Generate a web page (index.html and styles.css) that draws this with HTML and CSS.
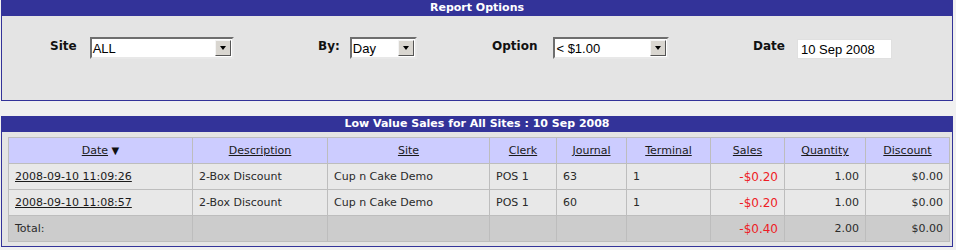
FILE: index.html
```html
<!DOCTYPE html>
<html>
<head>
  <title>Low Value Sales</title>
  <link rel="stylesheet" href="styles.css">
</head>
<body>
  <div class="panel">
    <div class="panel-title">Report Options</div>
    <div class="panel-body options">
      <div class="field field-site">
        <span class="label">Site</span>
        <div class="select w-site"><span class="select-text">ALL</span><span class="select-btn"></span></div>
      </div>
      <div class="field field-by">
        <span class="label">By:</span>
        <div class="select w-by"><span class="select-text">Day</span><span class="select-btn"></span></div>
      </div>
      <div class="field field-option">
        <span class="label">Option</span>
        <div class="select w-option"><span class="select-text">&lt; $1.00</span><span class="select-btn"></span></div>
      </div>
      <div class="field field-date">
        <span class="label">Date</span>
        <input type="text" class="date-input" value="10 Sep 2008">
      </div>
    </div>
  </div>

  <div class="panel report">
    <div class="panel-title">Low Value Sales for All Sites : 10 Sep 2008</div>
    <div class="panel-body">
      <table class="grid">
        <thead>
          <tr>
            <th class="c-date"><a href="#">Date</a> <span class="sort">&#9660;</span></th>
            <th class="c-desc"><a href="#">Description</a></th>
            <th class="c-site"><a href="#">Site</a></th>
            <th class="c-clerk"><a href="#">Clerk</a></th>
            <th class="c-journal"><a href="#">Journal</a></th>
            <th class="c-term"><a href="#">Terminal</a></th>
            <th class="c-sales"><a href="#">Sales</a></th>
            <th class="c-qty"><a href="#">Quantity</a></th>
            <th class="c-disc"><a href="#">Discount</a></th>
          </tr>
        </thead>
        <tbody>
          <tr>
            <td><a href="#">2008-09-10 11:09:26</a></td>
            <td>2-Box Discount</td>
            <td>Cup n Cake Demo</td>
            <td>POS 1</td>
            <td>63</td>
            <td>1</td>
            <td class="num neg">-$0.20</td>
            <td class="num">1.00</td>
            <td class="num">$0.00</td>
          </tr>
          <tr>
            <td><a href="#">2008-09-10 11:08:57</a></td>
            <td>2-Box Discount</td>
            <td>Cup n Cake Demo</td>
            <td>POS 1</td>
            <td>60</td>
            <td>1</td>
            <td class="num neg">-$0.20</td>
            <td class="num">1.00</td>
            <td class="num">$0.00</td>
          </tr>
          <tr class="total">
            <td>Total:</td>
            <td></td>
            <td></td>
            <td></td>
            <td></td>
            <td></td>
            <td class="num neg">-$0.40</td>
            <td class="num">2.00</td>
            <td class="num">$0.00</td>
          </tr>
        </tbody>
      </table>
    </div>
  </div>
</body>
</html>
```

FILE: styles.css
```css
body {
  margin: 0;
  padding: 0 0 0 1px;
  background-color: #f0f0f0;
  font-family: "DejaVu Sans", Verdana, sans-serif;
  font-size: 11px;
  color: #222;
}

.panel {
  width: 950px;
  border: 1px solid #333399;
  background-color: #e4e4e4;
}

.panel-title {
  height: 15px;
  line-height: 14px;
  background-color: #333399;
  color: #ffffff;
  font-weight: bold;
  font-size: 11px;
  text-align: center;
}

/* report options */
.options {
  display: flex;
  align-items: center;
  height: 84px;
  padding-left: 48px;
  box-sizing: border-box;
  padding-bottom: 20px;
}

.field {
  display: flex;
  align-items: center;
}

.field-site { width: 268px; }
.field-by { width: 174px; }
.field-option { width: 261px; }

.label {
  font-weight: bold;
  font-size: 12px;
  color: #111;
  margin-right: 13px;
  margin-top: -4px;
}

.field-by .label { margin-right: 10px; }
.field-option .label { margin-right: 16px; }
.field-date .label { margin-right: 12px; }

.select {
  display: flex;
  align-items: center;
  height: 22px;
  box-sizing: border-box;
  border-style: solid;
  border-width: 2px;
  border-color: #6e6e6e #e8e8e8 #e8e8e8 #6e6e6e;
  background-color: #ffffff;
  font-family: "Liberation Sans", Arial, sans-serif;
  font-size: 13px;
  color: #000;
}

.w-site { width: 144px; }
.w-by { width: 67px; }
.w-option { width: 116px; }

.select-text {
  flex: 1;
  padding-left: 1px;
}

.select-btn {
  position: relative;
  width: 16px;
  height: 16px;
  margin-right: 1px;
  box-sizing: border-box;
  background-color: #d9d6d0;
  border-style: solid;
  border-width: 1px;
  border-color: #f4f4f4 #555 #555 #f4f4f4;
}

.select-btn::after {
  content: "";
  position: absolute;
  left: 4px;
  top: 5px;
  border-left: 3px solid transparent;
  border-right: 3px solid transparent;
  border-top: 4px solid #000;
}

.date-input {
  width: 95px;
  height: 20px;
  box-sizing: border-box;
  margin: 2px 0 0 0;
  padding: 0 3px;
  border: 1px solid #e0e0e0;
  background-color: #ffffff;
  font-family: "Liberation Sans", Arial, sans-serif;
  font-size: 13px;
  color: #000;
}

/* report table */
.report {
  margin-top: 15px;
}

.report .panel-body {
  padding: 5px 3px 4px 6px;
}

.grid {
  border-collapse: collapse;
  table-layout: fixed;
  width: 941px;
}

.grid th,
.grid td {
  border: 1px solid #bdbdbd;
  padding: 0 6px;
  height: 25px;
  box-sizing: border-box;
  white-space: nowrap;
  text-align: left;
  color: #2a2a2a;
}

.grid th {
  background-color: #ccccff;
  font-weight: normal;
  text-align: center;
  height: 26px;
}

.grid td {
  background-color: #e8e8e8;
  height: 26px;
}

.grid a {
  color: #1a1a1a;
  text-decoration: underline;
}

.sort {
  font-size: 10px;
  color: #111;
}

.grid .num {
  text-align: right;
}

.grid .neg {
  color: #ee1c25;
  font-size: 12px;
}

.grid .total td {
  background-color: #cccccc;
}

.c-date { width: 184px; }
.c-desc { width: 135px; }
.c-site { width: 162px; }
.c-clerk { width: 67px; }
.c-journal { width: 70px; }
.c-term { width: 84px; }
.c-sales { width: 74px; }
.c-qty { width: 81px; }
.c-disc { width: 84px; }
```
